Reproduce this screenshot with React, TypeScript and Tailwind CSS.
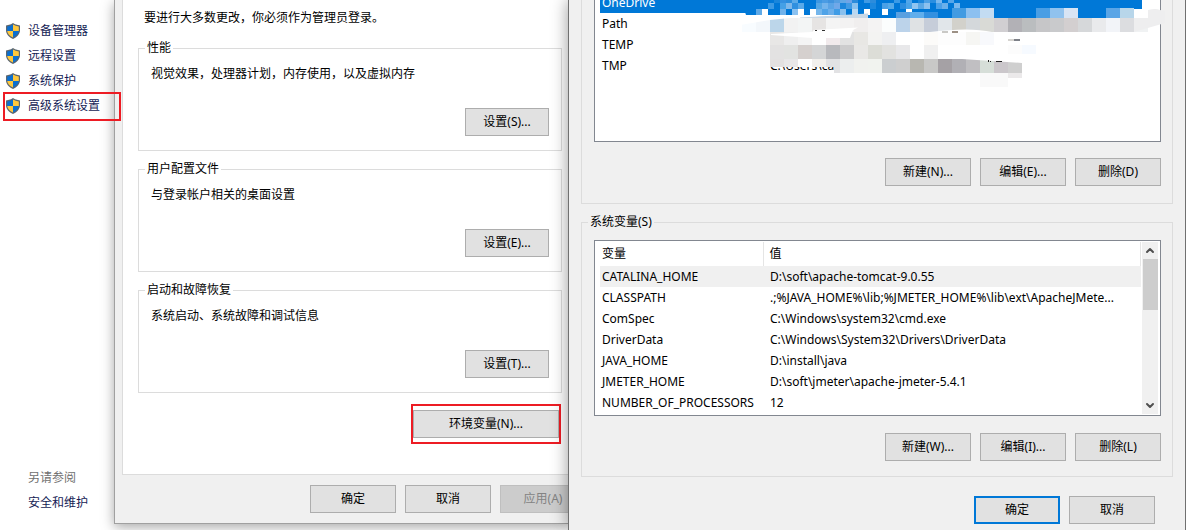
import type { ReactNode } from "react";
import { ChevronDown, ChevronUp } from "lucide-react";

const navItems = ["设备管理器", "远程设置", "系统保护", "高级系统设置"];

const groups = [
  { title: "性能", text: "视觉效果，处理器计划，内存使用，以及虚拟内存", button: "设置(S)..." },
  { title: "用户配置文件", text: "与登录帐户相关的桌面设置", button: "设置(E)..." },
  { title: "启动和故障恢复", text: "系统启动、系统故障和调试信息", button: "设置(T)..." },
];

const userVars = [
  ["OneDrive", ""],
  ["Path", ""],
  ["TEMP", ""],
  ["TMP", "C:\\Users\\ca"],
];

const systemVars = [
  ["CATALINA_HOME", "D:\\soft\\apache-tomcat-9.0.55"],
  ["CLASSPATH", ".;%JAVA_HOME%\\lib;%JMETER_HOME%\\lib\\ext\\ApacheJMete..."],
  ["ComSpec", "C:\\Windows\\system32\\cmd.exe"],
  ["DriverData", "C:\\Windows\\System32\\Drivers\\DriverData"],
  ["JAVA_HOME", "D:\\install\\java"],
  ["JMETER_HOME", "D:\\soft\\jmeter\\apache-jmeter-5.4.1"],
  ["NUMBER_OF_PROCESSORS", "12"],
];

// 马赛克: 每行从 x 开始，色块宽 size，"-" 表示空
const mosaicRows = [
  { x: 34, y: 0, size: 6, h: 3, colors: "#1a86db #3490e0 #2a8ddd #5aaae8 - - - #3d97e2 #4a9ce4 #4294de #559fe2 #62a8e6 #70a4e6 #2c8cdc - #3f9ae4 #2c8cdc - - - #3c9be6 - #52a6ea - #1c86dc #4ba0e6 #2a8ee0 #79b8ee - #55a6ea" },
  { x: 28, y: 3, size: 6, h: 6, colors: "#3c9ae4 - #45a0e6 #7fb8ea #2f90e0 #5aa9e8 - - #55a6e4 #74b4ec #5aa4e6 #70a8e8 #1b86dc #3f9ae4 #8ac1ee - - #1c88de - #4aa0e6 #55aae8 - #2c8ee0 #49a3e8 #90c4f0 #5ba8e6 #8cc0ee - #4aa0e8 #6ab0ea - #79b8ee" },
  { x: 16, y: 9, size: 6, h: 6, colors: "#5fa9e6 #ffffff - - #70b2ea - #8cc2f0 #ffffff - #ffffff #74b6ec #4fa3e8 #6aaeea #3f9ce6 #88c0ee - #b8d8f2 - #ffffff - - #ffffff - - - #ffffff" },
  { x: 156, y: 12, size: 14, h: 6, colors: "#5aa0e0 #60aeec #3390e0" },
  { x: 212, y: 8, size: 14, h: 10, colors: "#429be2 #8cc0f0 #c3dcf2 - - - #4a9ee4 #90c2ee #d8e4f4 - - #5aa5e6 #b8d6ea" },
  { x: 2, y: 18, size: 14, h: 14, colors: "#f8fcff #f3f7fb #bcd6ea #f2f2f2 #f3f5f5 #e6e4e3 #f4f4f4 #f3f2f2 #f0eeee #f4f3f3 #fbfdfd #bcd3ea #dfe2e4 #c6cdd9 #e1e6ea #d2d1cb #d4d8db #d9dad6 #d1cfd2 #b2b1b6 #babdbf #c6c6c8 #c9cacc #d3cfd0 #d6d8da #e9eaec #f2f4f8 #dcdde0 #f0f2f3" },
  { x: 30, y: 32, size: 14, h: 13, colors: "#e8e7e6 #efefef #f4f4f4 - #f1eaec #e2e2e2 #e8e7e4 #f3f3f2 #eeeff1 - - #fcfbf9 #fdfdfd #fdfdfd #f6f6f3 #f8f9fc" },
  { x: 30, y: 45, size: 14, h: 14, colors: "#e3e2e2 #e2e3e1 #d5d0ce #d4d5d6 #b8b9bd #cccccd #e9e8e6 #dcddd7 #e2e2e0 #e8e8ea - #f0f0f0" },
  { x: 268, y: 45, size: 14, h: 9, colors: "#fcfcfc #f6faff" },
  { x: 30, y: 59, size: 14, h: 8, colors: "#e3e1e1 #e8e7e8 #ffffff #f2f0ed" },
  { x: 86, y: 59, size: 14, h: 8, colors: "#e2e2e4" },
  { x: 94, y: 59, size: 6, h: 14, colors: "#e2e2e4" },
  { x: 100, y: 59, size: 14, h: 14, colors: "#eceeee #f1f2ef #f1f3ef #cbced0 #cfcfcf #b8b7b1 #c8c8c7 #a5a1a5 #b1b0b5 #c0bfc2 #d6ded8 #cbc7cb #cfcfcf" },
  { x: 240, y: 73, size: 14, h: 14, colors: "#f9f9f9 #f9f9f9" },
  { x: 268, y: 73, size: 14, h: 5, colors: "#ebe9ea" },
];

function Redaction() {
  return (
    <svg viewBox="0 0 430 90" className="absolute top-0 left-[145px] h-[90px] w-[430px]">
      <path d="M0 0H402V18H128V15H6L4 9H0Z" fill="#0078d7" />
      <g shapeRendering="crispEdges">
        {mosaicRows.map((row) =>
          row.colors.split(" ").map((fill, i) =>
            fill === "-" ? null : (
              <rect key={`${row.x}-${row.y}-${i}`} x={row.x + i * row.size} y={row.y} width={row.size} height={row.h} fill={fill} />
            ),
          ),
        )}
      </g>
      <path d="M394 9H402V18H394Z" fill="#fff" />
      <path d="M408 10Q416 8 420 10L425 11V23L394 32V18H408Z" fill="#eeeeef" />
      <path d="M60 17.5 128 13.5V18H60Z" fill="#c9d8e6" />
      <path d="M0 15H100L60 17 30 20 0 25Z" fill="#fff" />
      <path d="M31 34 72 32 74 30 118 27.5 113 30 110 38H72L31 35Z" fill="#fff" />
      <path d="M190 32Q230 27 252 32L262 36 260 32Z" fill="#fff" />
      <path d="M222 59 282 63V59Z" fill="#fff" />
      <g shapeRendering="crispEdges">
        <path d="M75 30H77V31H75ZM82 30H85V31H82Z" fill="#333" />
        <path d="M202 31H208V33H202Z" fill="#cac9c6" />
        <path d="M212 31H218V33H212Z" fill="#9c9084" />
        <path d="M268 39H274V41H268Z" fill="#d5d3cf" />
        <path d="M274 39H280V41H274Z" fill="#7d8088" />
        <path d="M248 60H249V62H248ZM250 61H251V62H250ZM256 61H262V62H256Z" fill="#222" />
      </g>
    </svg>
  );
}

function Shield() {
  return (
    <svg viewBox="0 0 14 16" className="h-4 w-3.5 shrink-0">
      <path d="M7 0 9 1.2 14 2.4V7.5C13.9 11 11 14.4 7 16 3 14.4 .1 11 0 7.5V2.4L5 1.2Z" fill="#5b6670" />
      <path d="M7 1.4V8H1.2V3.4Q4.6 3 7 1.4Z" fill="#0b6fd0" />
      <path d="M7 1.4V8H12.8V3.4Q9.4 3 7 1.4Z" fill="#ffc83d" />
      <path d="M1.2 8H7V14.6Q1.8 12.4 1.2 8Z" fill="#ffc83d" />
      <path d="M12.8 8H7V14.6Q12.2 12.4 12.8 8Z" fill="#0b6fd0" />
    </svg>
  );
}

function Button({ children, className = "w-[86px]", disabled = false }: { children: ReactNode; className?: string; disabled?: boolean }) {
  return (
    <button
      type="button"
      disabled={disabled}
      className={`h-7 shrink-0 border border-[#adadad] bg-[#e1e1e1] disabled:border-[#bfbfbf] disabled:bg-[#cccccc] disabled:text-[#838383] ${className}`}
    >
      {children}
    </button>
  );
}

function Sidebar() {
  return (
    <nav className="relative z-30 flex flex-col justify-between pt-[18px] pb-[15px] text-[#151c55]">
      <ul>
        {navItems.map((item, i) => (
          <li key={item} className="relative">
            <a href="#" className="flex h-[25px] items-center gap-2 pl-1.5">
              <Shield />
              {item}
            </a>
            {i === 3 && <span className="absolute -top-px left-[3px] h-[29px] w-[118px] border-2 border-[#ed1c24]" />}
          </li>
        ))}
      </ul>
      <div className="pl-7 leading-[25px]">
        <p className="text-[#707070]">另请参阅</p>
        <a href="#">安全和维护</a>
      </div>
    </nav>
  );
}

function SystemProperties() {
  return (
    <section className="relative z-10 mb-1.5 flex flex-col border-b border-l border-[#a0a0a0] bg-[#f0f0f0] shadow-[0_3px_12px_rgba(0,0,0,0.35)]">
      <div className="ml-[7px] flex flex-1 flex-col border-b border-l border-[#dcdcdc] bg-white pr-1.5 pl-[15px]">
        <p className="mb-2.5 pt-2 pl-1.5 leading-5">要进行大多数更改，你必须作为管理员登录。</p>
        {groups.map((g) => (
          <fieldset key={g.title} className="mb-2 h-[113px] border border-[#dcdcdc] pr-3 pl-1.5">
            <legend className="px-0.5 leading-5">{g.title}</legend>
            <p className="pt-1.5 pl-1.5 leading-5">{g.text}</p>
            <div className="mt-6 flex justify-end">
              <Button className="w-[84px]">{g.button}</Button>
            </div>
          </fieldset>
        ))}
        <div className="mt-[3px] mr-px ml-auto border-2 border-[#ed1c24] py-1">
          <Button className="w-[146px]">环境变量(N)...</Button>
        </div>
      </div>
      <div className="flex gap-[9px] overflow-hidden py-2.5 pl-[195px]">
        <Button>确定</Button>
        <Button>取消</Button>
        <Button disabled>应用(A)</Button>
      </div>
    </section>
  );
}

function UserVariables() {
  return (
    <div className="border border-t-0 border-[#dcdcdc] pr-[11px] pb-[17px] pl-3">
      <div className="relative flow-root h-[142px] border border-t-0 border-[#828790] bg-white pr-[18px] pl-[5px]">
        <table className="-mt-2 w-full table-fixed">
          <tbody>
            {userVars.map(([name, value]) => (
              <tr key={name} className="h-[21px] first:bg-[#0078d7] first:text-white">
                <td className="w-[163px] px-0.5">{name}</td>
                <td className="px-[7px]">{value}</td>
              </tr>
            ))}
          </tbody>
        </table>
        <Redaction />
      </div>
      <div className="mt-4 flex justify-end gap-[9px]">
        <Button>新建(N)...</Button>
        <Button>编辑(E)...</Button>
        <Button>删除(D)</Button>
      </div>
    </div>
  );
}

function SystemVariables() {
  return (
    <fieldset className="mt-2 min-w-0 border border-[#dcdcdc] pr-[11px] pb-[15px] pl-3">
      <legend className="-ml-1.5 px-0.5 leading-5">系统变量(S)</legend>
      <div className="mt-2 flex h-44 border border-[#828790] bg-white py-px pr-0.5 pl-[5px]">
        <div className="min-w-0 flex-1">
          <table className="w-full table-fixed border-collapse">
            <thead>
              <tr className="h-6 text-left">
                <th className="w-[163px] px-0.5 font-normal">变量</th>
                <th className="border-x border-[#e5e5e5] px-1.5 font-normal">值</th>
              </tr>
            </thead>
            <tbody>
              {systemVars.map(([name, value]) => (
                <tr key={name} className="h-[21px] first:bg-[#f0f0f0]">
                  <td className="px-0.5">{name}</td>
                  <td className="truncate px-[7px]">{value}</td>
                </tr>
              ))}
            </tbody>
          </table>
        </div>
        <div className="ml-px flex w-4 flex-col items-center bg-[#f0f0f0] text-[#505050]">
          <ChevronUp className="h-[17px] w-3" strokeWidth={4} />
          <div className="h-[51px] w-[15px] bg-[#cdcdcd]" />
          <ChevronDown className="mt-auto h-[17px] w-3" strokeWidth={4} />
        </div>
      </div>
      <div className="mt-[17px] flex justify-end gap-[9px]">
        <Button>新建(W)...</Button>
        <Button>编辑(I)...</Button>
        <Button>删除(L)</Button>
      </div>
    </fieldset>
  );
}

function EnvironmentVariables() {
  return (
    <section className="relative z-20 border-x border-[#707070] bg-[#f0f0f0] px-3 shadow-[0_0_16px_rgba(0,0,0,0.4)]">
      <UserVariables />
      <SystemVariables />
      <div className="mt-[19px] flex justify-end gap-[9px] pr-[18px]">
        <Button className="w-[86px] outline-2 -outline-offset-2 outline-[#0078d7]">确定</Button>
        <Button>取消</Button>
      </div>
    </section>
  );
}

export default function App() {
  return (
    <main className="grid min-h-screen grid-cols-[114px_454px_minmax(0,1fr)] overflow-hidden bg-white font-['Noto_Sans','Noto_Sans_CJK_SC',sans-serif] text-xs text-black">
      <Sidebar />
      <SystemProperties />
      <EnvironmentVariables />
    </main>
  );
}
